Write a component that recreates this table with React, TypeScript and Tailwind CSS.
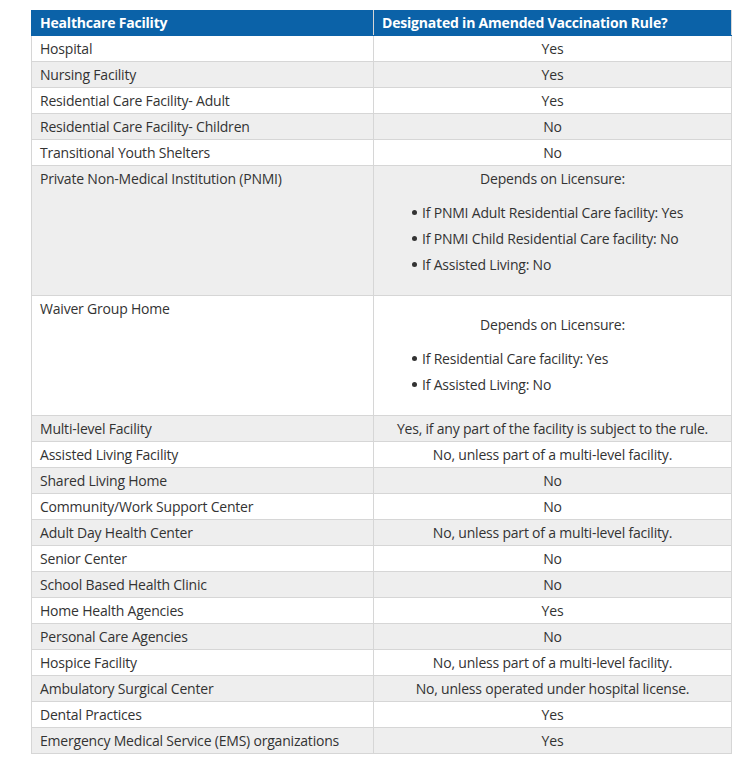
import React from 'react';

type Row = {
  facility: string;
  answer?: string;
  licensure?: { items: string[]; top: string };
};

const ROWS: Row[] = [
  { facility: 'Hospital', answer: 'Yes' },
  { facility: 'Nursing Facility', answer: 'Yes' },
  { facility: 'Residential Care Facility- Adult', answer: 'Yes' },
  { facility: 'Residential Care Facility- Children', answer: 'No' },
  { facility: 'Transitional Youth Shelters', answer: 'No' },
  {
    facility: 'Private Non-Medical Institution (PNMI)',
    licensure: {
      top: 'pt-[3px]',
      items: [
        'If PNMI Adult Residential Care facility: Yes',
        'If PNMI Child Residential Care facility: No',
        'If Assisted Living: No'
      ]
    }
  },
  {
    facility: 'Waiver Group Home',
    licensure: {
      top: 'pt-[19px]',
      items: ['If Residential Care facility: Yes', 'If Assisted Living: No']
    }
  },
  { facility: 'Multi-level Facility', answer: 'Yes, if any part of the facility is subject to the rule.' },
  { facility: 'Assisted Living Facility', answer: 'No, unless part of a multi-level facility.' },
  { facility: 'Shared Living Home', answer: 'No' },
  { facility: 'Community/Work Support Center', answer: 'No' },
  { facility: 'Adult Day Health Center', answer: 'No, unless part of a multi-level facility.' },
  { facility: 'Senior Center', answer: 'No' },
  { facility: 'School Based Health Clinic', answer: 'No' },
  { facility: 'Home Health Agencies', answer: 'Yes' },
  { facility: 'Personal Care Agencies', answer: 'No' },
  { facility: 'Hospice Facility', answer: 'No, unless part of a multi-level facility.' },
  { facility: 'Ambulatory Surgical Center', answer: 'No, unless operated under hospital license.' },
  { facility: 'Dental Practices', answer: 'Yes' },
  { facility: 'Emergency Medical Service (EMS) organizations', answer: 'Yes' }
];

const App: React.FC = () => {
  return (
    <div className="min-h-[763px] bg-white pl-[31px] pt-[10px] font-['Open_Sans',sans-serif] text-[14px] leading-[19px] tracking-[-0.2px] text-[#333]">
      <table className="w-[701px] table-fixed border-collapse">
        <colgroup>
          <col className="w-[342px]" />
          <col />
        </colgroup>
        <thead>
          <tr className="bg-[#0b62a8] text-white">
            <th className="border border-[#0b62a8] border-r-[#d6d6d6] px-2 pt-[2px] pb-[3px] text-left font-bold">
              Healthcare Facility
            </th>
            <th className="border border-[#0b62a8] border-r-[#d6d6d6] px-2 pt-[2px] pb-[3px] text-left font-bold">
              Designated in Amended Vaccination Rule?
            </th>
          </tr>
        </thead>
        <tbody>
          {ROWS.map((row, i) => (
            <tr key={row.facility} className={i % 2 === 1 ? 'bg-[#eeeeee]' : 'bg-white'}>
              <td
                className={`border border-[#d6d6d6] px-2 ${
                  row.licensure ? 'pt-[3px] align-top' : 'py-[3px]'
                }`}
              >
                {row.facility}
              </td>
              {row.licensure ? (
                <td className={`border border-[#d6d6d6] px-2 pb-[21px] align-top ${row.licensure.top}`}>
                  <p className="text-center">Depends on Licensure:</p>
                  <ul className="mt-[15px] flex flex-col gap-[7px] pl-[30px]">
                    {row.licensure.items.map((item) => (
                      <li key={item} className="flex items-center gap-[5px]">
                        <span className="h-[5px] w-[5px] shrink-0 rounded-full bg-[#333]" />
                        {item}
                      </li>
                    ))}
                  </ul>
                </td>
              ) : (
                <td className="border border-[#d6d6d6] px-2 py-[3px] text-center">{row.answer}</td>
              )}
            </tr>
          ))}
        </tbody>
      </table>
    </div>
  );
};

export default App;
